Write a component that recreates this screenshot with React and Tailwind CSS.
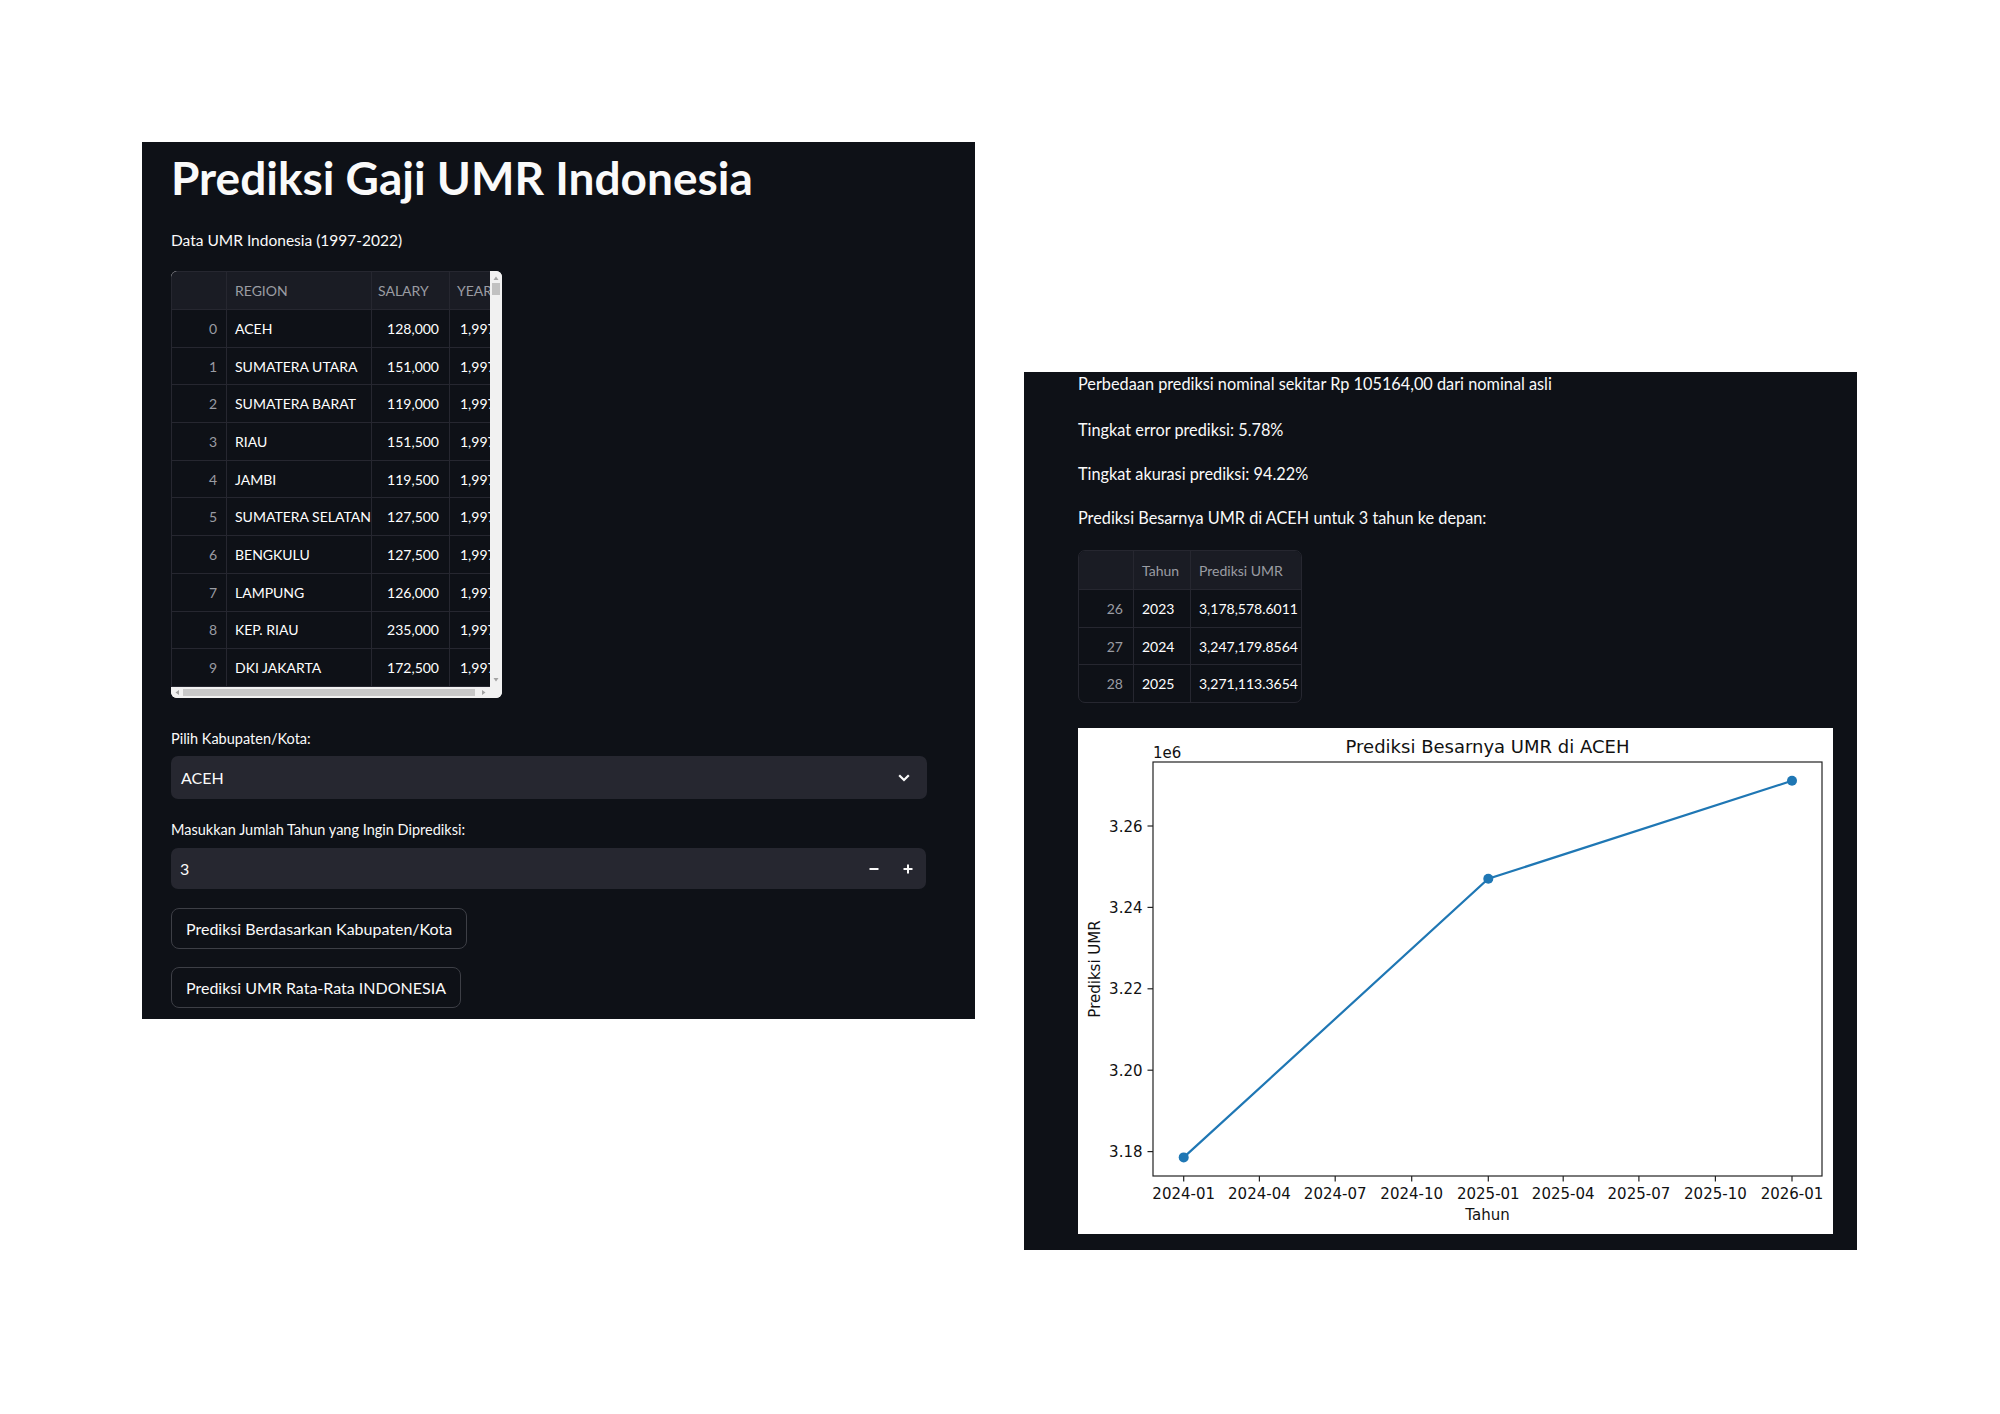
import React from "react";

const dataRows = [
  [0, "ACEH", "128,000"],
  [1, "SUMATERA UTARA", "151,000"],
  [2, "SUMATERA BARAT", "119,000"],
  [3, "RIAU", "151,500"],
  [4, "JAMBI", "119,500"],
  [5, "SUMATERA SELATAN", "127,500"],
  [6, "BENGKULU", "127,500"],
  [7, "LAMPUNG", "126,000"],
  [8, "KEP. RIAU", "235,000"],
  [9, "DKI JAKARTA", "172,500"],
];

const predRows = [
  [26, "2023", "3,178,578.6011"],
  [27, "2024", "3,247,179.8564"],
  [28, "2025", "3,271,113.3654"],
];

const VScroll = () => (
  <div className="w-[12px] h-[416px] bg-[#f1f1f1]">
    <svg width="12" height="416" className="block">
      <path d="M3.5 9 L6 5.5 L8.5 9 Z" fill="#a3a3a3" />
      <rect x="2" y="12" width="8" height="12" fill="#c1c1c1" />
      <path d="M3.5 407 L6 410.5 L8.5 407 Z" fill="#a3a3a3" />
    </svg>
  </div>
);

const HScroll = () => (
  <div className="h-[11px] bg-[#f1f1f1] flex">
    <svg width="331" height="11" className="block">
      <path d="M8 3 L4.5 5.5 L8 8 Z" fill="#a3a3a3" />
      <rect x="12" y="2" width="292" height="7" fill="#c8c8c8" />
      <path d="M311 3 L314.5 5.5 L311 8 Z" fill="#a3a3a3" />
    </svg>
  </div>
);

const DataTable = () => (
  <div className="mt-[19px] w-[331px] h-[427px] rounded-[6px] overflow-hidden bg-[#f1f1f1] flex flex-col">
    <div className="flex h-[416px]">
      <div className="w-[320px] h-full bg-[#0e1117] overflow-hidden border-l border-t border-[#262730] rounded-tl-[6px] text-[14px] whitespace-nowrap">
        <div className="flex h-[38px] bg-[#1a1c24] border-b border-[#262730] text-[#9a9ca3] w-[400px]">
          <div className="w-[55px] shrink-0 border-r border-[#262730]" />
          <div className="w-[145px] shrink-0 border-r border-[#262730] pl-[8px] flex items-center">REGION</div>
          <div className="w-[78px] shrink-0 border-r border-[#262730] pl-[6px] flex items-center">SALARY</div>
          <div className="w-[100px] shrink-0 pl-[7px] flex items-center">YEAR</div>
        </div>
        {dataRows.map(([i, region, salary]) => (
          <div key={i} className="flex h-[37.7px] border-b border-[#262730] w-[400px]">
            <div className="w-[55px] shrink-0 border-r border-[#262730] pr-[9px] flex items-center justify-end text-[#9a9ca3]">{i}</div>
            <div className="w-[145px] shrink-0 border-r border-[#262730] pl-[8px] flex items-center text-white">{region}</div>
            <div className="w-[78px] shrink-0 border-r border-[#262730] pr-[10px] flex items-center justify-end text-white">{salary}</div>
            <div className="w-[100px] shrink-0 pl-[10px] flex items-center text-white">1,997</div>
          </div>
        ))}
      </div>
      <VScroll />
    </div>
    <HScroll />
  </div>
);

const PredTable = () => (
  <div className="mt-[20px] w-[224px] rounded-[7px] border border-[#262730] overflow-hidden text-[14px] whitespace-nowrap">
    <div className="flex h-[38px] bg-[#1a1c24] text-[#9a9ca3]">
      <div className="w-[55px] border-r border-[#262730]" />
      <div className="w-[57px] border-r border-[#262730] pl-[8px] flex items-center">Tahun</div>
      <div className="flex-1 pl-[8px] flex items-center">Prediksi UMR</div>
    </div>
    {predRows.map(([i, y, v]) => (
      <div key={i} className="flex h-[37.7px] border-t border-[#262730]">
        <div className="w-[55px] border-r border-[#262730] pr-[10px] flex items-center justify-end text-[#9a9ca3]">{i}</div>
        <div className="w-[57px] border-r border-[#262730] pl-[8px] flex items-center text-white">{y}</div>
        <div className="flex-1 pl-[8px] flex items-center text-white">{v}</div>
      </div>
    ))}
  </div>
);

const xTicks = [
  [105.7, "2024-01"],
  [181.4, "2024-04"],
  [257.2, "2024-07"],
  [333.7, "2024-10"],
  [410.3, "2025-01"],
  [485.2, "2025-04"],
  [560.9, "2025-07"],
  [637.4, "2025-10"],
  [714.0, "2026-01"],
];

const yTicks = [
  [98, "3.26"],
  [179.4, "3.24"],
  [260.8, "3.22"],
  [342.2, "3.20"],
  [423.6, "3.18"],
];

const points = [
  [105.7, 429.4],
  [410.3, 150.8],
  [714.0, 52.8],
];

const Chart = () => (
  <div className="mt-[25px] w-[755px] h-[506px] bg-white">
    <svg width="755" height="506" className="block" fontFamily="'DejaVu Sans', sans-serif" fill="#111">
      <text x="409.5" y="25" textAnchor="middle" fontSize="18">Prediksi Besarnya UMR di ACEH</text>
      <text x="75" y="29.5" fontSize="15">1e6</text>
      <rect x="75" y="34" width="669" height="414" fill="none" stroke="#222" strokeWidth="1.2" />
      {yTicks.map(([y, t]) => (
        <g key={t}>
          <line x1="69.5" y1={y} x2="75" y2={y} stroke="#222" strokeWidth="1.2" />
          <text x="64.5" y={y + 5.5} textAnchor="end" fontSize="15">{t}</text>
        </g>
      ))}
      {xTicks.map(([x, t]) => (
        <g key={t}>
          <line x1={x} y1="448" x2={x} y2="453.5" stroke="#222" strokeWidth="1.2" />
          <text x={x} y="471" textAnchor="middle" fontSize="15">{t}</text>
        </g>
      ))}
      <text x="409.5" y="492" textAnchor="middle" fontSize="15">Tahun</text>
      <text x="22" y="241" textAnchor="middle" fontSize="15" transform="rotate(-90 22 241)">Prediksi UMR</text>
      <polyline
        points={points.map((p) => p.join(",")).join(" ")}
        fill="none"
        stroke="#1f77b4"
        strokeWidth="2.2"
      />
      {points.map(([x, y]) => (
        <circle key={x} cx={x} cy={y} r="5" fill="#1f77b4" />
      ))}
    </svg>
  </div>
);

export default function App() {
  return (
    <div className="w-[2000px] h-[1414px] bg-white flex items-start pl-[142px] pt-[142px] gap-[49px] font-[Lato,sans-serif] text-[#fafafa]">
      {/* left window */}
      <div className="w-[833px] h-[877px] bg-[#0e1117] px-[29px] flex flex-col items-start">
        <h1 className="mt-[8px] h-[56px] leading-[56px] text-[46px] font-bold">Prediksi Gaji UMR Indonesia</h1>
        <p className="mt-[22px] h-[24px] leading-[24px] text-[15.5px]">Data UMR Indonesia (1997-2022)</p>
        <DataTable />
        <p className="mt-[29px] h-[24px] leading-[24px] text-[14.5px]">Pilih Kabupaten/Kota:</p>
        <div className="mt-[5px] w-[756px] h-[43px] bg-[#262730] rounded-[7px] flex items-center justify-between pl-[10px] pr-[17px]">
          <span className="text-[16px]">ACEH</span>
          <svg width="12" height="8" viewBox="0 0 12 8">
            <path d="M1.2 1.2 L6 6 L10.8 1.2" fill="none" stroke="#fafafa" strokeWidth="2.2" />
          </svg>
        </div>
        <p className="mt-[19px] h-[24px] leading-[24px] text-[14.5px]">Masukkan Jumlah Tahun yang Ingin Diprediksi:</p>
        <div className="mt-[6px] w-[755px] h-[41px] bg-[#262730] rounded-[7px] flex items-center pl-[9px] pr-[13px]">
          <span className="flex-1 text-[16px]">3</span>
          <div className="flex items-center gap-[24px]">
            <svg width="10" height="10" viewBox="0 0 10 10">
              <line x1="0.5" y1="5" x2="9.5" y2="5" stroke="#fafafa" strokeWidth="2" />
            </svg>
            <svg width="10" height="10" viewBox="0 0 10 10">
              <line x1="0.5" y1="5" x2="9.5" y2="5" stroke="#fafafa" strokeWidth="2" />
              <line x1="5" y1="0.5" x2="5" y2="9.5" stroke="#fafafa" strokeWidth="2" />
            </svg>
          </div>
        </div>
        <button className="mt-[19px] h-[41px] px-[14px] rounded-[8px] border border-[#3d3f46] text-[16px] bg-[#0e1117]">
          Prediksi Berdasarkan Kabupaten/Kota
        </button>
        <button className="mt-[18px] h-[41px] px-[14px] rounded-[8px] border border-[#3d3f46] text-[16px] bg-[#0e1117]">
          Prediksi UMR Rata-Rata INDONESIA
        </button>
      </div>

      {/* right window */}
      <div className="mt-[230px] w-[833px] h-[878px] bg-[#0e1117] pl-[54px] flex flex-col items-start">
        <p className="h-[24px] leading-[24px] text-[16.3px]">Perbedaan prediksi nominal sekitar Rp 105164,00 dari nominal asli</p>
        <p className="mt-[22px] h-[24px] leading-[24px] text-[16.3px]">Tingkat error prediksi: 5.78%</p>
        <p className="mt-[20px] h-[24px] leading-[24px] text-[16.3px]">Tingkat akurasi prediksi: 94.22%</p>
        <p className="mt-[20px] h-[24px] leading-[24px] text-[16.3px]">Prediksi Besarnya UMR di ACEH untuk 3 tahun ke depan:</p>
        <PredTable />
        <Chart />
      </div>
    </div>
  );
}
